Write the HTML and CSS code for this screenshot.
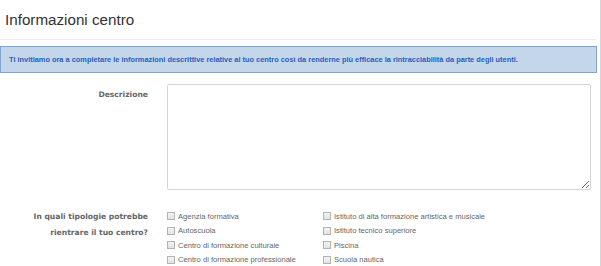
FILE: index.html
```html
<!DOCTYPE html>
<html lang="it">
<head>
<meta charset="utf-8">
<link rel="stylesheet" href="styles.css">
</head>
<body>
<div class="page">
  <h1 class="title">Informazioni centro</h1>
  <div class="rule"></div>
  <div class="alert">Ti invitiamo ora a completare le informazioni descrittive relative al tuo centro così da renderne più efficace la rintracciabilità da parte degli utenti.</div>
  <div class="row row-desc">
    <label class="label">Descrizione</label>
    <textarea class="textarea"></textarea>
  </div>
  <div class="row row-types">
    <div class="label">In quali tipologie potrebbe<br>rientrare il tuo centro?</div>
    <div class="checks">
      <label class="check"><input type="checkbox"><span>Agenzia formativa</span></label>
      <label class="check"><input type="checkbox"><span>Istituto di alta formazione artistica e musicale</span></label>
      <label class="check"><input type="checkbox"><span>Autoscuola</span></label>
      <label class="check"><input type="checkbox"><span>Istituto tecnico superiore</span></label>
      <label class="check"><input type="checkbox"><span>Centro di formazione culturale</span></label>
      <label class="check"><input type="checkbox"><span>Piscina</span></label>
      <label class="check"><input type="checkbox"><span>Centro di formazione professionale</span></label>
      <label class="check"><input type="checkbox"><span>Scuola nautica</span></label>
    </div>
  </div>
</div>
</body>
</html>
```
FILE: styles.css
```css
html, body {
  margin: 0;
  padding: 0;
  background: #fff;
}
body {
  font-family: "Liberation Sans", Arial, sans-serif;
  overflow: hidden;
}
.page {
  width: 600px;
  height: 266px;
  border-right: 1px solid #d6d6d6;
  box-sizing: content-box;
}
.title {
  margin: 0;
  padding: 11px 0 0 5px;
  font-size: 15.2px;
  line-height: 17px;
  font-weight: normal;
  color: #333;
}
.rule {
  margin-top: 11px;
  width: 596px;
  height: 1px;
  background: #ececec;
}
.alert {
  margin-top: 6px;
  width: 597px;
  height: 27px;
  box-sizing: border-box;
  border: 1px solid #7fa3d8;
  background: #c3d6ea;
  color: #2660bf;
  font-weight: bold;
  font-size: 7.4px;
  line-height: 25px;
  padding: 0 8px;
  white-space: nowrap;
}
.row {
  display: grid;
  grid-template-columns: 148px 1fr;
  column-gap: 19px;
}
.row-desc {
  margin-top: 11px;
}
.label {
  text-align: right;
  font-family: "DejaVu Sans", sans-serif;
  font-weight: bold;
  font-size: 7.6px;
  color: #666;
}
.row-desc .label {
  padding-top: 6px;
}
.textarea {
  display: block;
  width: 424px;
  height: 106px;
  box-sizing: border-box;
  border: 1px solid #d4d4d4;
  border-radius: 2px;
  margin: 0;
  padding: 4px;
  resize: vertical;
  background: #fff;
}
.row-types {
  margin-top: 18px;
}
.row-types .label {
  line-height: 16px;
  padding-top: 1px;
}
.checks {
  display: grid;
  grid-template-columns: 156px 1fr;
  grid-auto-rows: 14.5px;
  padding-top: 1px;
}
.check {
  display: flex;
  align-items: center;
  gap: 3px;
  font-size: 7.6px;
  color: #666;
  white-space: nowrap;
}
.check input {
  appearance: none;
  -webkit-appearance: none;
  margin: 0;
  width: 8px;
  height: 8px;
  border: 1px solid #b3b3b3;
  background: linear-gradient(#f4f4f4, #e2e2e2);
  box-sizing: border-box;
}
```
